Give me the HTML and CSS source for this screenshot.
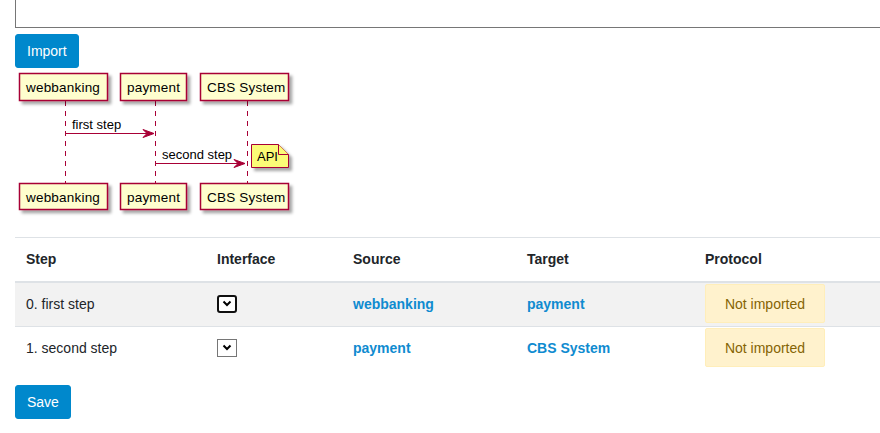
FILE: index.html
```html
<!DOCTYPE html>
<html>
<head>
<meta charset="utf-8">
<link rel="stylesheet" href="styles.css">
</head>
<body>
<div class="page">
  <textarea class="source"></textarea>
  <button class="btn">Import</button>
  <svg class="diagram" width="300" height="145" viewBox="15 72 300 145" xmlns="http://www.w3.org/2000/svg">
    <defs>
      <filter id="sh" x="-20%" y="-20%" width="160%" height="160%">
        <feGaussianBlur in="SourceAlpha" stdDeviation="1.6"/>
        <feOffset dx="3" dy="3" result="b"/>
        <feFlood flood-color="#000" flood-opacity="0.35"/>
        <feComposite in2="b" operator="in"/>
        <feMerge><feMergeNode/><feMergeNode in="SourceGraphic"/></feMerge>
      </filter>
    </defs>
    <g stroke="#A80036" stroke-width="1" stroke-dasharray="5,5">
      <line x1="65.5" y1="101" x2="65.5" y2="183"/>
      <line x1="155.5" y1="101" x2="155.5" y2="183"/>
      <line x1="247.5" y1="101" x2="247.5" y2="183"/>
    </g>
    <g fill="#FEFECE" stroke="#A80036" stroke-width="1.5" filter="url(#sh)">
      <rect x="19.5" y="73.5" width="88" height="27"/>
      <rect x="120.5" y="73.5" width="66" height="27"/>
      <rect x="200.5" y="73.5" width="88" height="27"/>
      <rect x="19.5" y="183.5" width="88" height="26"/>
      <rect x="120.5" y="183.5" width="66" height="26"/>
      <rect x="200.5" y="183.5" width="88" height="26"/>
    </g>
    <g class="ptext">
      <text x="26" y="92">webbanking</text>
      <text x="127" y="92">payment</text>
      <text x="207" y="92">CBS System</text>
      <text x="26" y="202">webbanking</text>
      <text x="127" y="202">payment</text>
      <text x="207" y="202">CBS System</text>
    </g>
    <g stroke="#A80036" stroke-width="1" fill="#A80036">
      <line x1="65.5" y1="133.5" x2="153" y2="133.5"/>
      <polygon points="143,129.5 154,133.5 143,137.5 147,133.5"/>
      <line x1="155.5" y1="163.5" x2="244" y2="163.5"/>
      <polygon points="234,159.5 245,163.5 234,167.5 238,163.5"/>
    </g>
    <g class="mtext">
      <text x="72" y="129">first step</text>
      <text x="162" y="159">second step</text>
    </g>
    <g filter="url(#sh)">
      <polygon points="251.5,144.5 251.5,167.5 288.5,167.5 288.5,154.5 278.5,144.5" fill="#FBFB77" stroke="#A80036" stroke-width="1"/>
      <path d="M278.5,144.5 L278.5,154.5 L288.5,154.5" fill="#FBFB77" stroke="#A80036" stroke-width="1"/>
    </g>
    <text class="ntext" x="257" y="161">API</text>
  </svg>

  <table class="steps">
    <thead>
      <tr>
        <th class="c-step">Step</th>
        <th class="c-if">Interface</th>
        <th class="c-src">Source</th>
        <th class="c-tgt">Target</th>
        <th class="c-prot">Protocol</th>
      </tr>
    </thead>
    <tbody>
      <tr class="odd">
        <td>0. first step</td>
        <td><span class="pick focused"><svg width="10" height="7" viewBox="0 0 10 7"><path d="M1.5 1.5 L5 5 L8.5 1.5" fill="none" stroke="#000" stroke-width="2"/></svg></span></td>
        <td><a class="lnk">webbanking</a></td>
        <td><a class="lnk">payment</a></td>
        <td class="prot"><div class="status">Not imported</div></td>
      </tr>
      <tr>
        <td>1. second step</td>
        <td><span class="pick"><svg width="10" height="7" viewBox="0 0 10 7"><path d="M1.5 1.5 L5 5 L8.5 1.5" fill="none" stroke="#000" stroke-width="2"/></svg></span></td>
        <td><a class="lnk">payment</a></td>
        <td><a class="lnk">CBS System</a></td>
        <td class="prot"><div class="status">Not imported</div></td>
      </tr>
    </tbody>
  </table>
  <button class="btn save">Save</button>
</div>
</body>
</html>
```
FILE: styles.css
```css
html, body {
  margin: 0;
  padding: 0;
  overflow: hidden;
  background: #fff;
}
body {
  font-family: "Liberation Sans", Arial, sans-serif;
  font-size: 14px;
  line-height: 20px;
  color: #212529;
}
.page {
  padding-left: 15px;
  width: 1000px;
}
.source {
  display: block;
  width: 980px;
  height: 60px;
  margin: -32px 0 0 0;
  border: 1px solid #767676;
  padding: 0;
  resize: none;
  box-sizing: border-box;
}
.btn {
  display: block;
  margin-top: 6px;
  height: 34px;
  padding: 0 11px;
  background: #0088cc;
  color: #fff;
  border: 1px solid #0088cc;
  border-radius: 3px;
  font-family: "Liberation Sans", Arial, sans-serif;
  font-size: 14px;
  line-height: 20px;
}
.diagram {
  display: block;
  margin-top: 4px;
}
.ptext text {
  font-family: "Liberation Sans", Arial, sans-serif;
  font-size: 13.5px;
  letter-spacing: 0.2px;
  fill: #000;
}
.mtext text, .ntext {
  font-family: "Liberation Sans", Arial, sans-serif;
  font-size: 13px;
  fill: #000;
}
.steps {
  margin-top: 20px;
  border-collapse: collapse;
  width: 985px;
}
.steps th {
  text-align: left;
  font-weight: bold;
  padding: 11px 11px 12px;
  border-top: 1px solid #dee2e6;
  border-bottom: 2px solid #dee2e6;
}
.c-step { width: 169px; }
.c-if { width: 114px; }
.c-src { width: 152px; }
.c-tgt { width: 156px; }
.steps td {
  padding: 1px 11px 3px;
  height: 39px;
  vertical-align: middle;
  border-top: 1px solid #dee2e6;
}
.steps tr.odd td {
  background: #f2f2f2;
}
.lnk {
  color: #0f8bd0;
  font-weight: bold;
}
.pick {
  display: flex;
  align-items: center;
  justify-content: center;
  width: 20px;
  height: 18px;
  box-sizing: border-box;
  border: 1px solid #767676;
  background: #fff;
}
.pick.focused {
  border: 2px solid #101010;
  border-radius: 3px;
}
.status {
  width: 120px;
  height: 39px;
  box-sizing: border-box;
  display: flex;
  align-items: center;
  justify-content: center;
  background: #fff2cd;
  border: 1px solid #ffeeba;
  border-radius: 2px;
  color: #856404;
}
.save {
  margin-top: 15px;
}
```
